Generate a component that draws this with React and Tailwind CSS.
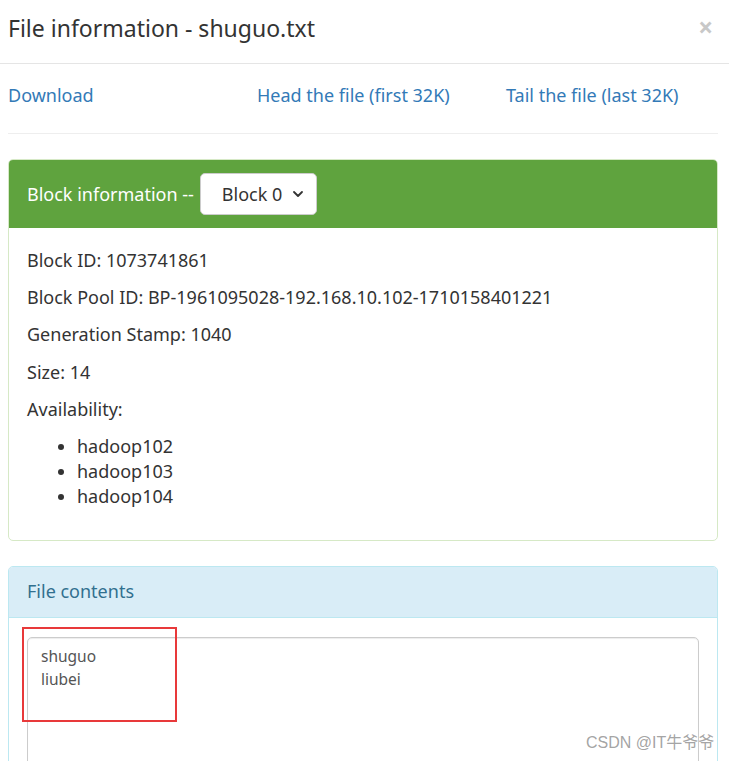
import { ChevronDown } from "lucide-react";

const blockInfo = [
  "Block ID: 1073741861",
  "Block Pool ID: BP-1961095028-192.168.10.102-1710158401221",
  "Generation Stamp: 1040",
  "Size: 14",
  "Availability:",
];

const hosts = ["hadoop102", "hadoop103", "hadoop104"];

export default function App() {
  return (
    <div
      className="relative h-[761px] overflow-hidden bg-white text-[#333] text-[18px] leading-[25px]"
      style={{ fontFamily: '"Noto Sans", "Open Sans", sans-serif' }}
    >
      {/* Modal header */}
      <div className="flex items-start justify-between border-b border-[#e5e5e5] pl-2 pr-4 pt-3 pb-[19px]">
        <h4 className="text-[23px] leading-[32px] font-normal">File information - shuguo.txt</h4>
        <span className="text-[26px] leading-[30px] font-bold text-[#c8c8c8]">×</span>
      </div>

      {/* Modal body */}
      <div className="pl-2 pr-[11px] pt-[19px]">
        <div className="flex">
          <div className="w-[249px] shrink-0">
            <a className="text-[#337ab7]">Download</a>
          </div>
          <div className="w-[249px] shrink-0">
            <a className="text-[#337ab7]">Head the file (first 32K)</a>
          </div>
          <div className="w-[200px] shrink-0">
            <a className="text-[#337ab7]">Tail the file (last 32K)</a>
          </div>
        </div>

        <hr className="mt-[25px] mb-[25px] border-t border-[#eee]" />

        {/* Block information panel */}
        <div className="mb-[25px] rounded-[5px] border border-[#d6e9c6]">
          <div className="flex items-center rounded-t-[4px] bg-[#5fa33e] px-[18px] py-[13px] text-white">
            <span>Block information --</span>
            <div className="ml-[6px] flex h-[42px] w-[117px] items-center justify-between rounded-[5px] border border-[#ccc] bg-white pl-[21px] pr-[10px] text-[#333]">
              <span>Block 0</span>
              <ChevronDown size={16} strokeWidth={2.75} className="text-[#333]" />
            </div>
          </div>
          <div className="px-[18px] pt-[19.5px] pb-[18px]">
            {blockInfo.map((line) => (
              <p key={line} className="mb-[12.4px]">
                {line}
              </p>
            ))}
            <ul className="mb-[12.5px] list-disc pl-[50px]">
              {hosts.map((h) => (
                <li key={h}>{h}</li>
              ))}
            </ul>
          </div>
        </div>

        {/* File contents panel */}
        <div className="rounded-[5px] border border-[#bce8f1]">
          <div className="rounded-t-[4px] border-b border-[#bce8f1] bg-[#d9edf7] px-[18px] py-[12.5px] text-[#31708f]">
            File contents
          </div>
          <div className="relative px-[18px] pt-[19px]">
            <div className="h-[160px] rounded-[5px] border border-[#ccc] px-[13px] py-[7px] text-[15.5px] leading-[23px] text-[#555] shadow-[inset_0_1px_1px_rgba(0,0,0,0.075)]">
              <div>shuguo</div>
              <div>liubei</div>
            </div>
            <div className="absolute left-[13px] top-[9px] h-[95px] w-[155px] border-2 border-[#e8393a]" />
          </div>
        </div>
      </div>

      <span
        className="absolute left-[586px] top-[732px] text-[16px] leading-[22px] text-[#999]/90"
        style={{ fontFamily: '"Liberation Sans", "Noto Sans CJK SC", sans-serif' }}
      >
        CSDN @IT牛爷爷
      </span>
    </div>
  );
}
